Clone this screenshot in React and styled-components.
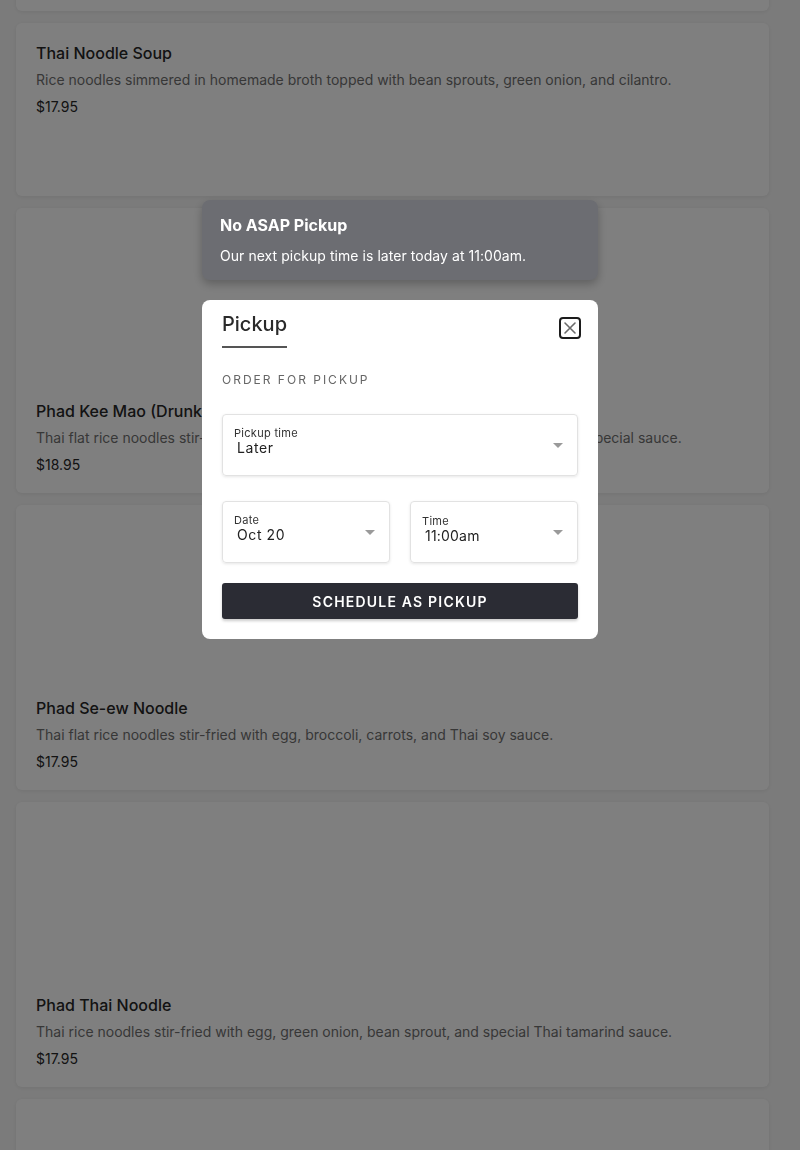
import React from "react"
import styled, { createGlobalStyle } from "styled-components"

const GlobalStyle = createGlobalStyle`
  * { box-sizing: border-box; }
  html, body { margin: 0; padding: 0; }
  body {
    background: #f7f7f7;
    font-family: Inter, "Liberation Sans", sans-serif;
    color: #262626;
    overflow: hidden;
  }
`

const items = [
  { id: "prev", title: "", desc: "", price: "", hidden: true },
  {
    id: "soup",
    title: "Thai Noodle Soup",
    desc: "Rice noodles simmered in homemade broth topped with bean sprouts, green onion, and cilantro.",
    price: "$17.95",
  },
  {
    id: "keemao",
    title: "Phad Kee Mao (Drunken Noodle)",
    desc: "Thai flat rice noodles stir-fried with egg, bell pepper, onion, tomato, basil, chili, and special sauce.",
    price: "$18.95",
    image: true,
  },
  {
    id: "seew",
    title: "Phad Se-ew Noodle",
    desc: "Thai flat rice noodles stir-fried with egg, broccoli, carrots, and Thai soy sauce.",
    price: "$17.95",
    image: true,
  },
  {
    id: "phadthai",
    title: "Phad Thai Noodle",
    desc: "Thai rice noodles stir-fried with egg, green onion, bean sprout, and special Thai tamarind sauce.",
    price: "$17.95",
    image: true,
  },
  { id: "next", title: "", desc: "", price: "", image: true, hidden: true },
]

const Caret = () => (
  <svg width="10" height="5" viewBox="0 0 10 5">
    <path d="M0 0 L10 0 L5 5 Z" fill="#9a9a9a" />
  </svg>
)

const CloseIcon = () => (
  <svg width="22" height="22" viewBox="0 0 22 22">
    <rect x="1" y="1" width="20" height="20" rx="3" fill="none" stroke="#1c1c1c" strokeWidth="2" />
    <path d="M6 6 L16 16 M16 6 L6 16" stroke="#6b6b6b" strokeWidth="1.6" strokeLinecap="round" />
  </svg>
)

const App = () => {
  return (
    <>
      <GlobalStyle />
      <MenuList>
        {items.map(item => (
          <Card key={item.id} $image={item.image}>
            {item.image && <ImageSpace />}
            {!item.hidden && (
              <CardBody>
                <CardTitle>{item.title}</CardTitle>
                <CardDesc>{item.desc}</CardDesc>
                <CardPrice>{item.price}</CardPrice>
              </CardBody>
            )}
          </Card>
        ))}
      </MenuList>

      <Overlay>
        <Toast>
          <ToastTitle>No ASAP Pickup</ToastTitle>
          <ToastText>Our next pickup time is later today at 11:00am.</ToastText>
        </Toast>

        <Modal>
          <ModalHeader>
            <Tab>Pickup</Tab>
            <CloseButton aria-label="Close">
              <CloseIcon />
            </CloseButton>
          </ModalHeader>

          <SectionLabel>Order for pickup</SectionLabel>

          <Field>
            <FieldText>
              <FieldLabel>Pickup time</FieldLabel>
              <FieldValue>Later</FieldValue>
            </FieldText>
            <Caret />
          </Field>

          <FieldRow>
            <Field>
              <FieldText>
                <FieldLabel>Date</FieldLabel>
                <FieldValue>Oct 20</FieldValue>
              </FieldText>
              <Caret />
            </Field>
            <Field>
              <FieldText>
                <FieldLabel $low>Time</FieldLabel>
                <FieldValue $tight>11:00am</FieldValue>
              </FieldText>
              <Caret />
            </Field>
          </FieldRow>

          <SubmitButton>Schedule as pickup</SubmitButton>
        </Modal>
      </Overlay>
    </>
  )
}

export default App

const MenuList = styled.div`
  display: flex;
  flex-direction: column;
  gap: 12px;
  padding: 0 31px 0 16px;
  margin-top: -162px;
`

const Card = styled.div`
  display: flex;
  flex-direction: column;
  flex-shrink: 0;
  background: #fff;
  border-radius: 6px;
  box-shadow: 0 1px 4px rgba(0, 0, 0, 0.08);
  min-height: ${p => (p.$image ? "285px" : "173px")};
`

const ImageSpace = styled.div`
  height: 173px;
`

const CardBody = styled.div`
  padding: 19px 20px 18px;
`

const CardTitle = styled.div`
  font-size: 16px;
  font-weight: 500;
  line-height: 22px;
  color: #262626;
`

const CardDesc = styled.div`
  margin-top: 6px;
  font-size: 14px;
  line-height: 20px;
  letter-spacing: 0;
  color: #6f6f6f;
`

const CardPrice = styled.div`
  margin-top: 7px;
  font-size: 14px;
  line-height: 20px;
  color: #262626;
`

const Overlay = styled.div`
  position: fixed;
  inset: 0;
  background: rgba(0, 0, 0, 0.5);
  display: flex;
  flex-direction: column;
  align-items: center;
  gap: 20px;
  padding-top: 200px;
`

const Toast = styled.div`
  width: 396px;
  height: 80px;
  padding: 14px 18px;
  background: #6c6d72;
  border-radius: 8px;
  box-shadow: 0 4px 10px rgba(0, 0, 0, 0.25);
  color: #fff;
`

const ToastTitle = styled.div`
  font-size: 16px;
  font-weight: 700;
  line-height: 22px;
`

const ToastText = styled.div`
  margin-top: 10px;
  font-size: 14px;
  line-height: 20px;
  letter-spacing: 0.05px;
`

const Modal = styled.div`
  width: 396px;
  padding: 12px 20px 20px;
  background: #fff;
  border-radius: 8px;
  display: flex;
  flex-direction: column;
`

const ModalHeader = styled.div`
  display: flex;
  justify-content: space-between;
  align-items: flex-start;
`

const Tab = styled.div`
  font-size: 20px;
  font-weight: 500;
  line-height: 24px;
  color: #2a2a2a;
  padding-bottom: 10px;
  border-bottom: 2px solid #555;
`

const CloseButton = styled.button`
  border: none;
  background: none;
  padding: 0;
  margin-top: 5px;
  margin-right: -3px;
  display: flex;
  cursor: pointer;
`

const SectionLabel = styled.div`
  margin-top: 24px;
  font-size: 12px;
  line-height: 16px;
  letter-spacing: 2px;
  text-transform: uppercase;
  color: #666;
`

const Field = styled.div`
  height: 62px;
  flex-shrink: 0;
  margin-top: 26px;
  padding: 0 14px 0 11px;
  border: 1px solid #e2e2e2;
  border-radius: 4px;
  box-shadow: 0 1px 3px rgba(0, 0, 0, 0.1);
  display: flex;
  align-items: center;
  justify-content: space-between;
`

const FieldRow = styled.div`
  display: flex;
  gap: 20px;
  & > ${Field} {
    flex: 1;
    margin-top: 25px;
  }
`

const FieldText = styled.div`
  display: flex;
  flex-direction: column;
  margin-top: -8px;
`

const FieldLabel = styled.div`
  font-size: 11px;
  line-height: 13px;
  letter-spacing: 0.3px;
  color: #333;
  margin-top: ${p => (p.$low ? "2px" : "0")};
`

const FieldValue = styled.div`
  font-size: 14px;
  line-height: 15px;
  letter-spacing: ${p => (p.$tight ? "0.2px" : "0.6px")};
  color: #222;
  padding-left: 3px;
`

const SubmitButton = styled.button`
  margin-top: 20px;
  height: 36px;
  border: none;
  border-radius: 3px;
  background: #2b2c34;
  box-shadow: 0 2px 3px rgba(0, 0, 0, 0.2);
  color: #fff;
  font-family: Inter, "Liberation Sans", sans-serif;
  font-size: 14px;
  font-weight: 600;
  letter-spacing: 1.2px;
  text-transform: uppercase;
  cursor: pointer;
`
